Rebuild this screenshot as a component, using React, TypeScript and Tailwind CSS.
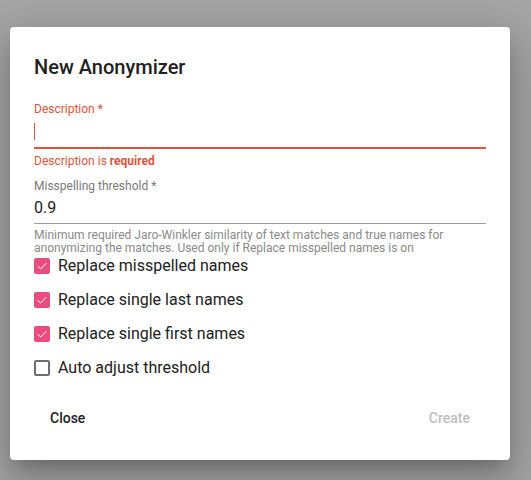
import { useState } from 'react'

const red = 'text-[#e1533a]'

function Check({ checked, label }: { checked: boolean; label: string }) {
  return (
    <label className="flex items-center h-4 gap-2">
      {checked ? (
        <span className="w-4 h-4 rounded-[2px] bg-[#e94d7f] flex items-center justify-center">
          <svg width="14" height="14" viewBox="0 0 14 14" fill="none">
            <path d="M2.8 7.2 L5.7 10 L11.2 4.2" stroke="white" strokeWidth="1" />
          </svg>
        </span>
      ) : (
        <span className="w-4 h-4 rounded-[2px] border-2 border-[#6e6e6e] bg-white" />
      )}
      <span className="text-[16px] leading-6 text-[#212121]">{label}</span>
    </label>
  )
}

export default function App() {
  const [checks] = useState([
    { label: 'Replace misspelled names', checked: true },
    { label: 'Replace single last names', checked: true },
    { label: 'Replace single first names', checked: true },
    { label: 'Auto adjust threshold', checked: false },
  ])

  return (
    <div className="w-[531px] h-[480px] bg-[#a5a5a5] pt-[27px] pl-[10px] font-['Roboto',sans-serif]">
      <div className="w-[500px] h-[433px] bg-white rounded-[4px] shadow-[0_11px_15px_-7px_rgba(0,0,0,0.2),0_24px_38px_3px_rgba(0,0,0,0.14),0_9px_46px_8px_rgba(0,0,0,0.12)] flex flex-col">
        <div className="pt-6 px-6">
          <h2 className="text-[20px] leading-8 font-medium text-[#212121]">New Anonymizer</h2>

          <div className={`mt-[19px] text-[12px] leading-[14px] ${red}`}>Description *</div>
          <div className="h-[33px] border-b-2 border-[#e1533a] flex items-end pb-[7px]">
            <span className="w-px h-[17px] bg-[#e1533a]" />
          </div>
          <div className={`mt-[5px] text-[12px] leading-[14px] ${red}`}>
            Description is <b className="font-bold">required</b>
          </div>

          <div className="mt-[11px] text-[12px] leading-[14px] text-[#7a7a7a]">Misspelling threshold *</div>
          <div className="h-[31px] border-b border-[#9e9e9e] pt-[3px] text-[16px] leading-6 text-[#212121]">0.9</div>
          <p className="mt-[5px] text-[12px] leading-[12.5px] text-[#8a8a8a]">
            Minimum required Jaro-Winkler similarity of text matches and true names for anonymizing the matches. Used
            only if Replace misspelled names is on
          </p>

          <div className="mt-[4px] flex flex-col gap-[18px]">
            {checks.map((c) => (
              <Check key={c.label} checked={c.checked} label={c.label} />
            ))}
          </div>
        </div>

        <div className="mt-[24px] px-6 flex justify-between">
          <button className="h-9 px-4 text-[14px] font-medium text-[#212121]">Close</button>
          <button disabled className="h-9 px-4 text-[14px] font-medium text-[#bdbdbd]">
            Create
          </button>
        </div>
      </div>
    </div>
  )
}
